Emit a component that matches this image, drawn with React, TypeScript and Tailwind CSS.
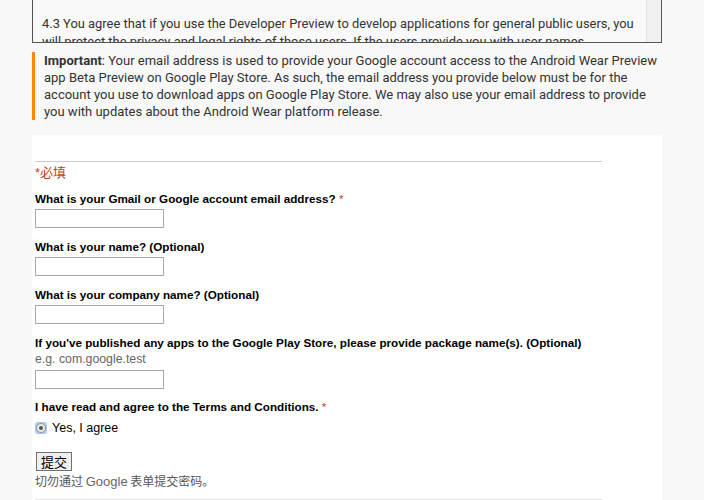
import React from "react";

const Q = ({ children }: { children: React.ReactNode }) => (
  <div className="text-[11.7px] leading-[15px] font-bold text-black">{children}</div>
);

const Input = () => (
  <div className="mt-[3px] w-[129px] h-[19px] border border-[#a9a9a9] bg-white" />
);

const Req = () => <span className="text-[#c43b1d] font-normal"> *</span>;

export default function App() {
  return (
    <div
      className="min-h-[500px] w-[704px] bg-[#f8f8f8] overflow-hidden"
      style={{ fontFamily: "Roboto, 'Noto Sans', sans-serif" }}
    >
      {/* Terms box */}
      <div className="ml-[32px] w-[630px] h-[43px] border-x border-b border-[#555] flex overflow-hidden bg-[#f9f9f9]">
        <div className="flex-1 min-w-0 overflow-hidden pl-[9px] pr-[4px] pt-[15px] text-[12.9px] leading-[18px] text-[#333]">
          <div className="whitespace-nowrap">
            4.3 You agree that if you use the Developer Preview to develop applications for general public users, you
          </div>
          <div className="whitespace-nowrap">
            will protect the privacy and legal rights of those users. If the users provide you with user names
          </div>
        </div>
        <div className="w-[15px] shrink-0 bg-[#f0f0f0] border-l border-[#e3e3e3]" />
      </div>

      {/* Important note */}
      <div className="ml-[32px] mt-[9px] w-[630px] border-l-[3px] border-[#ff8a00] pl-[9px] text-[13px] leading-[17px] text-[#333]">
        <b className="font-bold">Important</b>: Your email address is used to provide your Google account access to the Android Wear Preview
        app Beta Preview on Google Play Store. As such, the email address you provide below must be for the
        account you use to download apps on Google Play Store. We may also use your email address to provide
        you with updates about the Android Wear platform release.
      </div>

      {/* Form panel */}
      <div
        className="ml-[32px] mt-[15px] w-[630px] bg-white pl-[3px] pt-[26px] pb-[10px]"
        style={{ fontFamily: "'Liberation Sans', Arial, 'Noto Sans CJK SC', sans-serif" }}
      >
        <div className="w-[567px] h-px bg-[#cccccc]" />
        <div className="mt-[2px] text-[13px] leading-[16px] text-[#c43b1d]">
          *<span style={{ fontFamily: "'Noto Sans CJK SC', sans-serif" }}>必填</span>
        </div>

        <div className="mt-[10px]">
          <Q>
            What is your Gmail or Google account email address?<Req />
          </Q>
          <Input />
        </div>

        <div className="mt-[11px]">
          <Q>What is your name? (Optional)</Q>
          <Input />
        </div>

        <div className="mt-[11px]">
          <Q>What is your company name? (Optional)</Q>
          <Input />
        </div>

        <div className="mt-[11px]">
          <Q>If you've published any apps to the Google Play Store, please provide package name(s). (Optional)</Q>
          <div className="mt-[2px] text-[12.3px] leading-[15px] text-[#666]">e.g. com.google.test</div>
          <Input />
        </div>

        <div className="mt-[10px]">
          <Q>
            I have read and agree to the Terms and Conditions.<Req />
          </Q>
          <div className="mt-[7px] flex items-center h-[14px]">
            <span className="w-[12px] h-[12px] rounded-[3px] bg-[#a8c8f4] flex items-center justify-center">
              <span className="w-[10px] h-[10px] rounded-full bg-[#e8e8e8] border border-[#9a9a9a] flex items-center justify-center">
                <span className="w-[4px] h-[4px] rounded-full bg-[#555]" />
              </span>
            </span>
            <span className="ml-[5px] text-[12.5px] leading-[16px] text-black">Yes, I agree</span>
          </div>
        </div>

        <div className="mt-[17px] ml-[1px]">
          <button
            className="h-[19px] w-[36px] border border-[#707070] bg-[#efefef] text-[13px] leading-[15px] text-black flex items-center justify-center"
            style={{ fontFamily: "'Noto Sans CJK SC', sans-serif" }}
          >
            提交
          </button>
        </div>
        <div
          className="mt-[1px] text-[12px] leading-[17px] text-[#555]"
          style={{ fontFamily: "'Noto Sans CJK SC', sans-serif" }}
        >
          切勿通过{" "}
          <span className="text-[13px] text-[#666]" style={{ fontFamily: "'Liberation Sans', Arial, sans-serif" }}>
            Google
          </span>{" "}
          表单提交密码。
        </div>
        <div className="mt-[9px] w-[567px] h-px bg-[#e5e5e5]" />
      </div>
    </div>
  );
}
